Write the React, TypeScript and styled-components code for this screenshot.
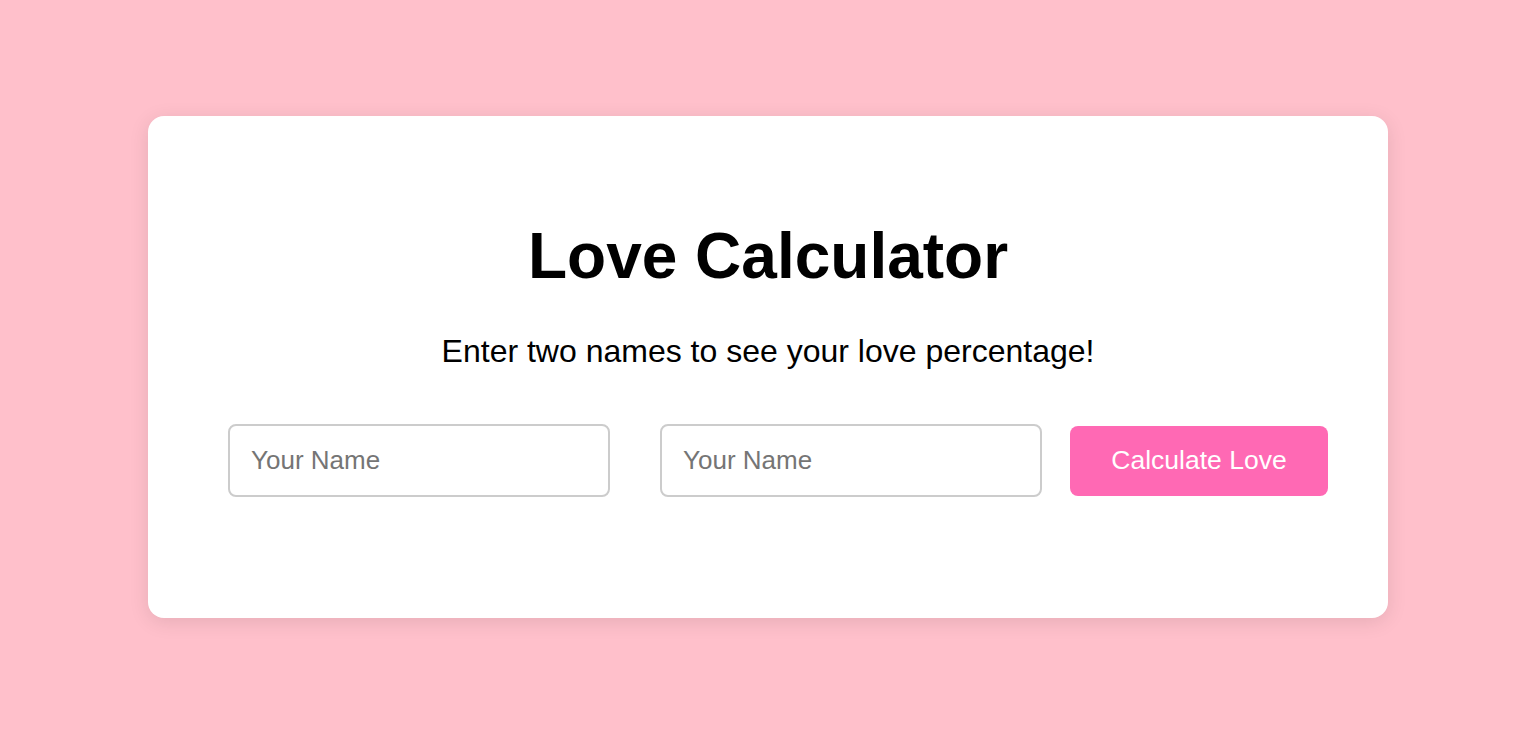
import React from "react";
import styled, { createGlobalStyle } from "styled-components";

const GlobalStyle = createGlobalStyle`
  html, body {
    margin: 0;
    padding: 0;
  }
  body {
    background: #ffc0cb;
    font-family: "Liberation Sans", Arial, sans-serif;
  }
  * { box-sizing: border-box; }
`;

const Page = styled.main`
  min-height: 100vh;
  display: flex;
  align-items: center;
  justify-content: center;
`;

const Card = styled.section`
  width: 1240px;
  height: 502px;
  background: #ffffff;
  border-radius: 16px;
  box-shadow: 0 4px 20px rgba(0, 0, 0, 0.1);
  padding: 103px 0 0;
  display: flex;
  flex-direction: column;
`;

const Title = styled.h1`
  margin: 0 0 40px;
  font-size: 64px;
  line-height: 74px;
  font-weight: 700;
  color: #000;
  text-align: center;
`;

const Subtitle = styled.p`
  margin: 0 0 54px;
  font-size: 32px;
  line-height: 37px;
  color: #000;
  text-align: center;
`;

const Row = styled.form`
  display: flex;
  align-items: center;
  padding: 0 60px 0 80px;
`;

const NameInput = styled.input<{ $spaceAfter: number }>`
  width: 382px;
  height: 73px;
  margin-right: ${(p) => p.$spaceAfter}px;
  padding: 0 21px;
  border: 2px solid #cccccc;
  border-radius: 8px;
  font-family: "Liberation Sans", Arial, sans-serif;
  font-size: 26px;
  color: #000;
  background: #fff;
  outline: none;
  &::placeholder {
    color: #757575;
  }
`;

const CalcButton = styled.button`
  width: 258px;
  height: 70px;
  border: none;
  border-radius: 8px;
  background: #ff69b4;
  color: #ffffff;
  font-family: "Liberation Sans", Arial, sans-serif;
  font-size: 26.5px;
  cursor: pointer;
`;

export default function App() {
  return (
    <>
      <GlobalStyle />
      <Page>
        <Card>
          <Title>Love Calculator</Title>
          <Subtitle>Enter two names to see your love percentage!</Subtitle>
          <Row onSubmit={(e) => e.preventDefault()}>
            <NameInput $spaceAfter={50} placeholder="Your Name" />
            <NameInput $spaceAfter={28} placeholder="Your Name" />
            <CalcButton type="submit">Calculate Love</CalcButton>
          </Row>
        </Card>
      </Page>
    </>
  );
}
